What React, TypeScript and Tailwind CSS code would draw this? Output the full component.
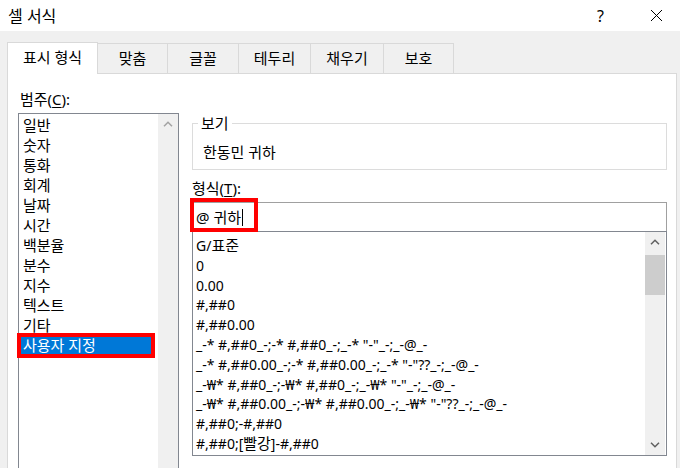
import React from 'react';

const categories = ['일반', '숫자', '통화', '회계', '날짜', '시간', '백분율', '분수', '지수', '텍스트', '기타'];

// Latin runs are set a little smaller than Hangul, as Malgun Gothic does
const formats: React.ReactNode[] = [
  <>G/<span className="text-[15px]">표준</span></>,
  '0',
  '0.00',
  '#,##0',
  '#,##0.00',
  '_-* #,##0_-;-* #,##0_-;_-* "-"_-;_-@_-',
  '_-* #,##0.00_-;-* #,##0.00_-;_-* "-"??_-;_-@_-',
  '_-₩* #,##0_-;-₩* #,##0_-;_-₩* "-"_-;_-@_-',
  '_-₩* #,##0.00_-;-₩* #,##0.00_-;_-₩* "-"??_-;_-@_-',
  '#,##0;-#,##0',
  <>#,##0;[<span className="text-[15px]">빨강</span>]-#,##0</>,
];

const tabs = [
  { label: '맞춤', w: 'w-[70px]' },
  { label: '글꼴', w: 'w-[71px]' },
  { label: '테두리', w: 'w-[72px]' },
  { label: '채우기', w: 'w-[73px]' },
  { label: '보호', w: 'w-[70px]' },
];

function Chevron({ up, color }: { up?: boolean; color: string }) {
  return (
    <svg width="10" height="6" viewBox="0 0 10 6" fill="none">
      <polyline
        points={up ? '1,5.2 5,1.2 9,5.2' : '1,0.8 5,4.8 9,0.8'}
        stroke={color}
        strokeWidth="1.5"
      />
    </svg>
  );
}

export default function App() {
  return (
    <div className="w-[680px] h-[468px] overflow-hidden bg-[#f0f0f0] flex flex-col font-['Noto_Sans','Noto_Sans_CJK_KR',sans-serif] text-[15px] text-black">
      {/* title bar */}
      <div className="h-[31px] shrink-0 bg-white flex items-center">
        <span className="pl-[8px] text-[16px] leading-[26px] flex-1">셀 서식</span>
        <span className="text-[16px] leading-[26px] mr-[46px]">?</span>
        <svg width="13" height="13" viewBox="0 0 13 13" className="mr-[17px]">
          <path d="M1 1 L12 12 M12 1 L1 12" stroke="#000" strokeWidth="1" />
        </svg>
      </div>

      {/* tabs */}
      <div className="flex items-end pl-[7px] pt-[11px] shrink-0">
        <div className="w-[91px] h-[32px] -mb-px bg-white border border-b-0 border-[#d9d9d9] relative z-10 flex items-center justify-center pb-[2px]">
          표시 형식
        </div>
        {tabs.map((t) => (
          <div
            key={t.label}
            className={`${t.w} h-[30px] border-t border-r border-[#d9d9d9] flex items-center justify-center`}
          >
            {t.label}
          </div>
        ))}
      </div>

      {/* panel */}
      <div className="ml-[7px] w-[670px] flex-1 bg-white border border-b-0 border-[#d9d9d9] flex pt-[15px] pl-[10px] gap-[13px]">
        {/* left column */}
        <div className="w-[161px] shrink-0 flex flex-col">
          <div className="h-[20px] leading-[20px] pl-[2px]">
            범주(<span className="underline underline-offset-2">C</span>):
          </div>
          <div className="mt-[4px] w-[161px] h-[400px] border border-[#828790] flex">
            <div className="flex-1 pt-[1px]">
              {categories.map((c) => (
                <div key={c} className="h-[20px] leading-[20px] pl-[4px]">
                  {c}
                </div>
              ))}
              <div className="relative h-[20px] leading-[20px] pl-[4px] mr-[4px] bg-[#0078d7] text-white">
                사용자 지정
                <div className="absolute -left-[2px] -top-[2px] right-[-1px] -bottom-[3px] border-[4px] border-[#ff0000]" />
              </div>
            </div>
            <div className="w-[20px] bg-[#f0f0f0] flex flex-col">
              <div className="h-[20px] flex items-center justify-center">
                <Chevron up color="#a3a3a3" />
              </div>
            </div>
          </div>
        </div>

        {/* right column */}
        <div className="w-[476px] flex flex-col">
          <fieldset className="mt-[24px] w-[475px] border border-[#dcdcdc]">
            <legend className="ml-[5px] px-[3px] leading-[20px]">보기</legend>
            <div className="mt-[9px] h-[20px] leading-[20px] pl-[10px] mb-[7px]">한동민 귀하</div>
          </fieldset>

          <div className="mt-[8px] h-[20px] leading-[20px]">
            형식(<span className="underline underline-offset-2">T</span>):
          </div>

          <div className="relative mt-[4px] w-[475px] h-[29px] border border-b-0 border-[#a0a0a0] pl-[3px] leading-[28px] flex items-center">
            <span>@ 귀하</span>
            <span className="inline-block w-px h-[17px] bg-black ml-[1px]" />
            <div className="absolute -left-[3px] -top-[5px] w-[68px] h-[34px] border-[4px] border-[#ff0000]" />
          </div>

          <div className="w-[475px] h-[225px] border border-[#828790] flex">
            <div className="flex-1 pt-[4px] pl-[3px] overflow-hidden whitespace-nowrap text-[14px]">
              {formats.map((f, i) => (
                <div key={i} className="h-[19.8px] leading-[19.8px]">
                  {f}
                </div>
              ))}
            </div>
            <div className="w-[20px] mr-[1px] bg-[#f0f0f0] flex flex-col">
              <div className="h-[20px] flex items-center justify-center">
                <Chevron up color="#606060" />
              </div>
              <div className="mt-[3px] h-[40px] bg-[#cdcdcd]" />
              <div className="flex-1" />
              <div className="h-[20px] flex items-center justify-center">
                <Chevron color="#606060" />
              </div>
            </div>
          </div>
        </div>
      </div>
    </div>
  );
}
